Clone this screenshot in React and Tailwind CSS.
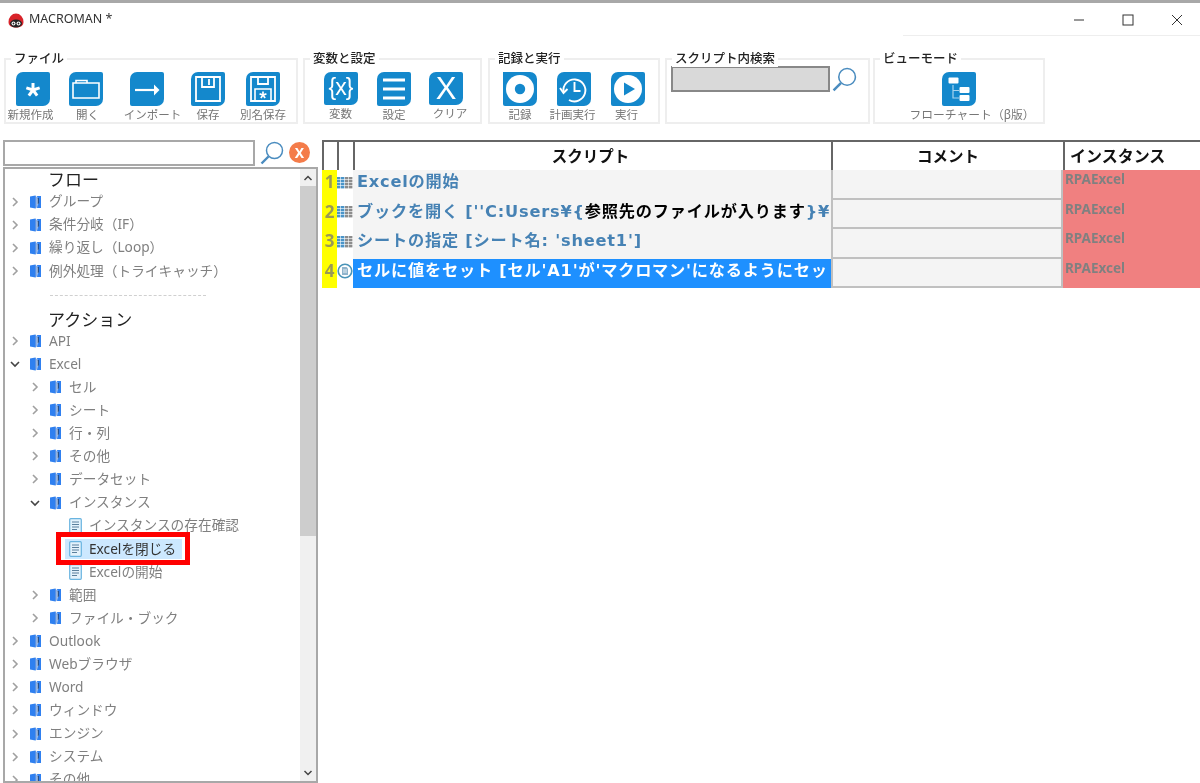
import React from "react";

const JP = "font-['Noto_Sans','Noto_Sans_CJK_JP',sans-serif]";

const IconBox = ({ children, corner }) => (
  <div className={`w-[34px] h-[34px] bg-[#1488cc] rounded-br-[7px] rounded-bl-[2px] flex items-center justify-center text-white ${corner || "rounded-tl-[7px] rounded-tr-[2px]"}`}>
    {children}
  </div>
);

const Glyph = ({ children }) => (
  <svg width="34" height="34" viewBox="0 0 34 34" fill="none" stroke="white" strokeWidth="1.6">
    {children}
  </svg>
);

const Star = ({ cx, cy, r, w }) => (
  <g stroke="white" strokeWidth={w} strokeLinecap="butt">
    <line x1={cx} y1={cy} x2={cx} y2={cy - r} />
    <line x1={cx} y1={cy} x2={cx + r * 0.95} y2={cy - r * 0.31} />
    <line x1={cx} y1={cy} x2={cx + r * 0.59} y2={cy + r * 0.81} />
    <line x1={cx} y1={cy} x2={cx - r * 0.59} y2={cy + r * 0.81} />
    <line x1={cx} y1={cy} x2={cx - r * 0.95} y2={cy - r * 0.31} />
  </g>
);

const NewIcon = () => (
  <Glyph>
    <Star cx={17} cy={18} r={7} w={3} />
  </Glyph>
);

const OpenIcon = () => (
  <Glyph>
    <path d="M4 11h26v15H4zM7 11V8.5h11V11" />
  </Glyph>
);

const ImportIcon = () => (
  <Glyph>
    <path d="M5 18h22" strokeWidth="2.2" />
    <path d="M24 12.5l5.5 5.5-5.5 5.5z" fill="white" stroke="none" />
  </Glyph>
);

const SaveIcon = () => (
  <Glyph>
    <path d="M5 5h24v24H5zM11 5v10h12V5" strokeWidth="1.8" />
    <path d="M18 7v6" strokeWidth="1.8" />
  </Glyph>
);

const SaveAsIcon = () => (
  <Glyph>
    <path d="M5 5h24v24H5zM12 5v7h10V5" strokeWidth="1.8" />
    <path d="M9 29V17h16v12" strokeWidth="1.6" />
    <Star cx={17} cy={23} r={3.6} w={1.7} />
  </Glyph>
);

const VarIcon = () => (
  <span className="text-[23px] leading-none font-['Liberation_Sans',sans-serif] tracking-[-1px] mt-[-2px]">{"{x}"}</span>
);

const MenuIcon = () => (
  <Glyph>
    <path d="M6 8h22M6 17h22M6 26h22" strokeWidth="3" />
  </Glyph>
);

const ClearIcon = () => (
  <span className="text-[31px] leading-none font-['Liberation_Sans',sans-serif]">X</span>
);

const RecIcon = () => (
  <Glyph>
    <circle cx="17" cy="17" r="14" fill="white" stroke="none" />
    <circle cx="17" cy="17" r="5.2" fill="#1488cc" stroke="none" />
  </Glyph>
);

const TimerIcon = () => (
  <Glyph>
    <path d="M6.5 20A11 11 0 1 1 12 28" strokeWidth="1.9" />
    <path d="M3 16l3.5 5 4-4" strokeWidth="1.9" />
    <path d="M17.5 10v9h6" strokeWidth="1.9" />
  </Glyph>
);

const PlayIcon = () => (
  <Glyph>
    <circle cx="17" cy="17" r="14" fill="white" stroke="none" />
    <path d="M13 10.5l11 6.5-11 6.5z" fill="#1488cc" stroke="none" />
  </Glyph>
);

const FlowIcon = () => (
  <Glyph>
    <path d="M11 13v13h6M11 18.5h6" stroke="#a8d4ee" strokeWidth="1.2" />
    <rect x="6.5" y="5.5" width="10" height="6" rx="1" fill="white" stroke="none" />
    <rect x="17.5" y="15" width="10" height="6" rx="1" fill="white" stroke="none" />
    <rect x="17.5" y="23" width="10" height="6" rx="1" fill="white" stroke="none" />
  </Glyph>
);

const Magnifier = ({ size }) => (
  <svg width={size} height={size} viewBox="0 0 24 24" fill="none" stroke="#4a8cbf">
    <circle cx="14.5" cy="9.5" r="8" strokeWidth="1.5" />
    <path d="M8.5 15.5L1.5 22.5" strokeWidth="2.4" />
  </svg>
);

const Tool = ({ w, label, labelClass, corner, children }) => (
  <div className={`flex flex-col items-center ${w}`}>
    <IconBox corner={corner}>{children}</IconBox>
    <span className={`text-[11.5px] leading-[17px] whitespace-nowrap text-[#777777] ${labelClass || ""}`}>{label}</span>
  </div>
);

const Group = ({ w, title, children }) => (
  <div className={`relative h-[66px] border-2 border-[#eeeeee] flex pt-[12px] ${w}`}>
    <span className="absolute left-[5px] top-[-9px] px-[3px] bg-white text-[12.5px] leading-[16px] font-medium text-[#222222] whitespace-nowrap">
      {title}
    </span>
    {children}
  </div>
);

const BookIcon = () => (
  <svg width="11" height="14" viewBox="0 0 11 14" className="shrink-0">
    <path d="M0 1.5L5.5 0.5V13.5L0 12.5z" fill="#2f80f0" />
    <path d="M5.5 0.5L6.5 2V12.5L5.5 13.5z" fill="#1f66d0" />
    <path d="M7 1h4v12H7l0.5-3.5L9 8.5V3.5H7.5z" fill="#2f80f0" />
    <path d="M7.5 3h1.5v5.5l-1.5 1z" fill="#22508f" />
  </svg>
);

const DocIcon = () => (
  <svg width="13" height="16" viewBox="0 0 13 16" className="shrink-0" fill="none">
    <rect x="0.7" y="0.7" width="11.6" height="14.6" rx="1" fill="#e4f2fb" stroke="#69b4e0" strokeWidth="1.2" />
    <path d="M3 4h7M3 6.5h7M3 9h7M3 11.5h5" stroke="#5a7f9c" strokeWidth="1" />
  </svg>
);

const Chevron = ({ open }) => (
  <svg width="10" height="10" viewBox="0 0 10 10" fill="none" stroke={open ? "#444444" : "#a0a0a0"} strokeWidth="1.6" className="shrink-0">
    {open ? <path d="M1 3l4 4 4-4" /> : <path d="M3 1l4 4-4 4" />}
  </svg>
);

const FolderRow = ({ label, open, sub }) => (
  <div className={`h-[23.1px] flex items-center ${sub ? "pl-[25px]" : "pl-[5px]"}`}>
    <Chevron open={open} />
    <span className="w-[10px]" />
    <BookIcon />
    <span className="ml-[8px] text-[13.7px] text-[#808080] whitespace-nowrap">{label}</span>
  </div>
);

const LeafRow = ({ label, selected }) => (
  <div className="h-[23.1px] flex items-center pl-[60px]">
    <div className={`h-[20px] w-[117px] flex items-center pl-[4px] ${selected ? "bg-[#cce8ff]" : ""}`}>
      <DocIcon />
      <span className={`ml-[7px] text-[13.7px] whitespace-nowrap ${selected ? "text-[#333333]" : "text-[#808080]"}`}>{label}</span>
    </div>
  </div>
);

const flow = ["グループ", "条件分岐（IF）", "繰り返し（Loop）", "例外処理（トライキャッチ）"];
const subs = ["セル", "シート", "行・列", "その他", "データセット"];
const tail = ["Outlook", "Webブラウザ", "Word", "ウィンドウ", "エンジン", "システム", "その他"];

const RowGlyph = () => (
  <svg width="16" height="12" viewBox="0 0 16 12">
    {[0, 1, 2, 3].map((r) =>
      [0, 1, 2, 3].map((c) => (
        <rect key={`${r}-${c}`} x={c * 4} y={r * 3} width="3.4" height="2.4" fill={c < 2 ? "#4a94c8" : "#8c8c8c"} />
      ))
    )}
  </svg>
);

const RowDoc = () => (
  <svg width="16" height="16" viewBox="0 0 16 16" fill="none">
    <circle cx="8" cy="8" r="6.8" fill="white" stroke="#4a94b8" strokeWidth="1.6" />
    <path d="M5 4h4.5L11 5.5V12H5z" fill="#8fb4cc" />
    <path d="M6 7h4M6 9h4" stroke="white" strokeWidth="0.8" />
  </svg>
);

const Cell = ({ children, className }) => <div className={`min-w-0 overflow-hidden ${className || ""}`}>{children}</div>;

const rows = [
  { script: <>Excelの開始</> },
  { script: <>ブックを開く [''C:Users¥{"{"}<span className="text-black">参照先のファイルが入ります</span>{"}"}¥</> },
  { script: <>シートの指定 [シート名: 'sheet1']</> },
  { script: <>セルに値をセット [セル'A1'が'マクロマン'になるようにセット]</>, active: true },
];

const cols = "grid grid-cols-[15px_16px_478px_232px_137px]";

export default function App() {
  return (
    <div className={`w-[1200px] h-[783px] overflow-hidden bg-white flex flex-col blur-[0.35px] ${JP}`}>
      <div className="h-[3px] bg-[#a8a8a8] shrink-0" />

      {/* title bar */}
      <div className="h-[33px] shrink-0 flex items-center pl-[8px] relative">
        <svg width="16" height="16" viewBox="0 0 16 16">
          <path d="M0.5 10a7.5 8.5 0 0 1 15 0c0 3-2 5.5-7.5 5.5S0.5 13 0.5 10z" fill="#d8232a" />
          <ellipse cx="8" cy="11.5" rx="6" ry="4" fill="#222222" />
          <circle cx="5.5" cy="11.5" r="2" fill="white" />
          <circle cx="10.5" cy="11.5" r="2" fill="white" />
          <circle cx="5.5" cy="11.5" r="0.9" fill="#222222" />
          <circle cx="10.5" cy="11.5" r="0.9" fill="#222222" />
        </svg>
        <span className="ml-[5px] text-[12.5px] text-[#333333]">MACROMAN *</span>
        <div className="ml-auto flex items-center h-full pr-[17px]">
          <svg width="12" height="12" viewBox="0 0 12 12" stroke="#333333" fill="none" className="mr-[37px]"><path d="M1 6h10" /></svg>
          <svg width="12" height="12" viewBox="0 0 12 12" stroke="#333333" fill="none" className="mr-[37px]"><rect x="1" y="1" width="10" height="10" /></svg>
          <svg width="12" height="12" viewBox="0 0 12 12" stroke="#333333" fill="none"><path d="M1 1l10 10M11 1L1 11" /></svg>
        </div>
        <div className="absolute right-0 bottom-0 w-[297px] h-[1px] bg-[#eeeeee]" />
      </div>

      {/* ribbon */}
      <div className="mt-[22px] h-[66px] shrink-0 flex pl-[4px]">
        <Group w="w-[294px]" title="ファイル">
          <Tool w="w-[53px]" label="新規作成" labelClass="mr-[4px]"><NewIcon /></Tool>
          <Tool w="w-[54px]" label="開く" labelClass="ml-[3px]"><OpenIcon /></Tool>
          <Tool w="w-[68px]" label="インポート" labelClass="ml-[11px]"><ImportIcon /></Tool>
          <Tool w="w-[54px]" label="保存"><SaveIcon /></Tool>
          <Tool w="w-[56px]" label="別名保存"><SaveAsIcon /></Tool>
        </Group>
        <Group w="ml-[5px] w-[179px]" title="変数と設定">
          <Tool w="w-[71px]" label="変数"><VarIcon /></Tool>
          <Tool w="w-[36px]" label="設定"><MenuIcon /></Tool>
          <Tool w="w-[68px]" label="クリア" labelClass="ml-[8px]"><ClearIcon /></Tool>
        </Group>
        <Group w="ml-[6px] w-[172px]" title="記録と実行">
          <Tool w="w-[60px]" label="記録" corner="rounded-tr-[7px]"><RecIcon /></Tool>
          <Tool w="w-[48px]" label="計画実行" labelClass="mr-[3px]"><TimerIcon /></Tool>
          <Tool w="w-[60px]" label="実行" labelClass="mr-[3px]"><PlayIcon /></Tool>
        </Group>
        <Group w="ml-[5px] w-[205px]" title="スクリプト内検索">
          <div className="flex items-start mt-[-6px] ml-[4px]">
            <div className="w-[159px] h-[26px] bg-[#d9d9d9] border-2 border-[#888888]" />
            <div className="ml-[2px] mt-[1px]"><Magnifier size={25} /></div>
          </div>
        </Group>
        <Group w="ml-[3px] w-[172px]" title="ビューモード">
          <Tool w="w-full" label="フローチャート（β版）" labelClass="ml-[26px] text-[11.8px]"><FlowIcon /></Tool>
        </Group>
      </div>

      {/* main */}
      <div className="mt-[16px] flex flex-1 min-h-0 pl-[3px]">
        <div className="w-[315px] flex flex-col shrink-0">
          <div className="h-[27px] shrink-0 flex items-start">
            <div className="w-[252px] h-[26px] border-2 border-[#a8a8a8] bg-white" />
            <div className="ml-[5px] mt-[1px]"><Magnifier size={24} /></div>
            <div className="ml-[5px] mt-[2px] w-[21px] h-[21px] rounded-full bg-[#f47c4a] text-white text-[14px] font-bold flex items-center justify-center leading-none">X</div>
          </div>

          <div className="flex-1 min-h-0 border-2 border-[#a8a8a8] flex relative">
            <div className="flex-1 min-w-0 overflow-hidden relative">
              <div className="h-[21px] pl-[43px] text-[17px] leading-[21px] text-[#222222]">フロー</div>
              {flow.map((f) => <FolderRow key={f} label={f} />)}
              <div className="h-[27px] flex items-center pl-[45px]">
                <div className="w-[156px] border-t border-dashed border-[#d0d0d0]" />
              </div>
              <div className="h-[20px] pl-[43px] text-[17px] leading-[21px] text-[#222222]">アクション</div>
              <FolderRow label="API" />
              <FolderRow label="Excel" open />
              {subs.map((s) => <FolderRow key={s} label={s} sub />)}
              <FolderRow label="インスタンス" sub open />
              <LeafRow label="インスタンスの存在確認" />
              <div className="relative">
                <LeafRow label="Excelを閉じる" selected />
                <div className="absolute left-[51px] top-[-5px] w-[134px] h-[33px] border-[5px] border-[#ff0000]" />
              </div>
              <LeafRow label="Excelの開始" />
              <FolderRow label="範囲" sub />
              <FolderRow label="ファイル・ブック" sub />
              {tail.map((t) => <FolderRow key={t} label={t} />)}
            </div>

            {/* scrollbar */}
            <div className="w-[16px] shrink-0 bg-[#f0f0f0] flex flex-col">
              <div className="h-[17px] flex items-center justify-center">
                <svg width="10" height="8" viewBox="0 0 10 8" fill="none" stroke="#444444" strokeWidth="1.5"><path d="M1.5 6L5 2.5 8.5 6" /></svg>
              </div>
              <div className="h-[350px] bg-[#cdcdcd]" />
              <div className="mt-auto h-[17px] flex items-center justify-center">
                <svg width="10" height="8" viewBox="0 0 10 8" fill="none" stroke="#444444" strokeWidth="1.5"><path d="M1.5 2L5 5.5 8.5 2" /></svg>
              </div>
            </div>
          </div>
        </div>

        {/* script table */}
        <div className="ml-[4px] flex-1 min-w-0">
          <div className={`${cols} h-[30px] border-t-2 border-[#666666] text-[15.5px] font-bold text-[#111111] leading-[28px]`}>
            <div className="border-l-2 border-[#666666]" />
            <div className="border-l-2 border-[#666666]" />
            <div className="border-l-2 border-[#666666] text-center pr-[5px]">スクリプト</div>
            <div className="border-l-2 border-[#666666] text-center">コメント</div>
            <div className="border-l-2 border-[#666666] pl-[5px] whitespace-nowrap text-[16px]">インスタンス</div>
          </div>
          {rows.map((r, i) => (
            <div key={i} className={`${cols} h-[29.5px]`}>
              <Cell className="bg-[#ffff00] text-[17px] font-bold text-[#9a9a55] text-center leading-[23px]">{i + 1}</Cell>
              <Cell className="flex items-center justify-center pb-[4px]">{r.active ? <RowDoc /> : <RowGlyph />}</Cell>
              <Cell className={`text-[16.2px] font-['DejaVu_Sans','Noto_Sans_CJK_JP',sans-serif] font-bold whitespace-nowrap leading-[23px] pl-[4px] tracking-[0.8px] ${r.active ? "bg-[#1e90ff] text-white" : "bg-[#f4f4f4] text-[#4682b4]"}`}>
                {r.script}
              </Cell>
              <Cell className="bg-[#f4f4f4] border-b-2 border-l-2 border-r-2 border-[#c0c0c0]" />
              <Cell className="bg-[#f08080] text-[13.5px] font-bold text-[#808080] leading-[19px] pl-[2px]">RPAExcel</Cell>
            </div>
          ))}
        </div>
      </div>
    </div>
  );
}
